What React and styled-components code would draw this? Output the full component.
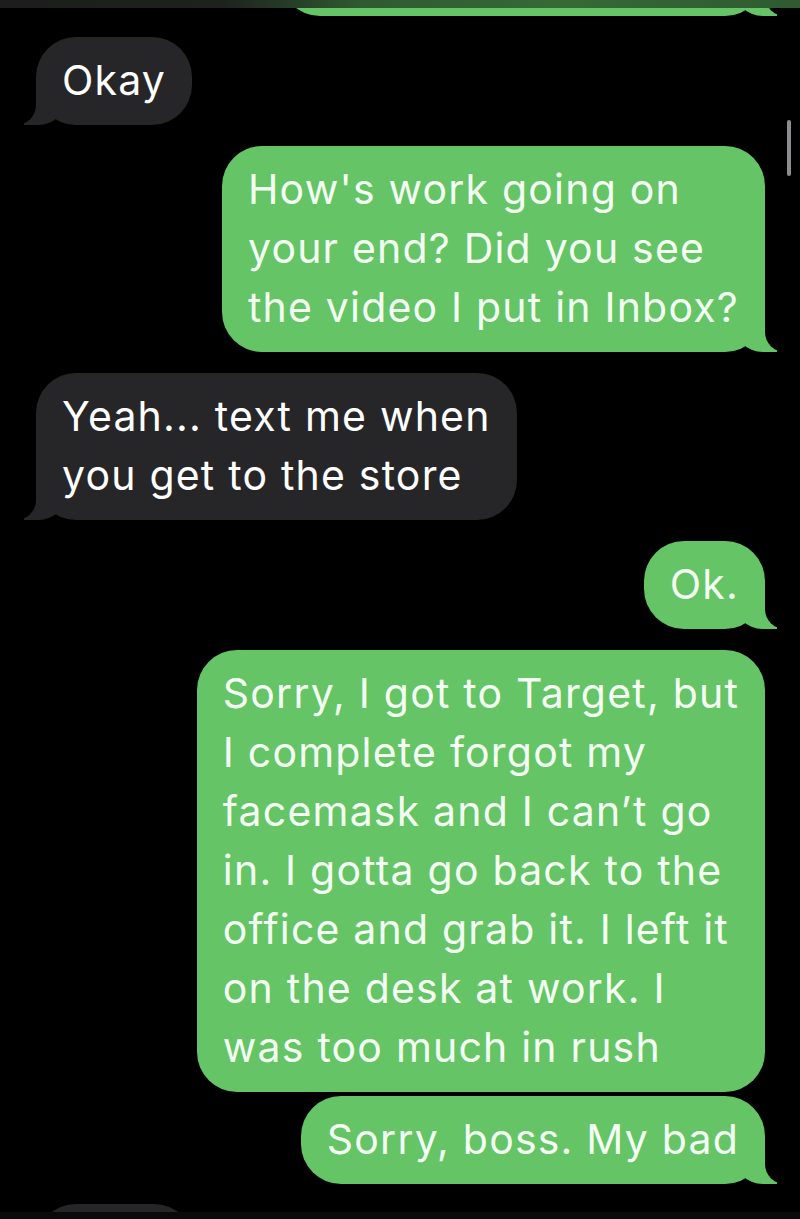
import React from "react";
import styled, { createGlobalStyle, css } from "styled-components";

const GREEN = "#65c466";
const GRAY = "#262628";
const BG = "#000000";

const messages = [
  { id: 0, sent: true, tail: true, lines: ["\u00a0"], width: 485, offset: -72 },
  { id: 1, sent: false, tail: true, lines: ["Okay"] },
  {
    id: 2,
    sent: true,
    tail: true,
    lines: ["How's work going on", "your end? Did you see", "the video I put in Inbox?"],
  },
  { id: 3, sent: false, tail: true, lines: ["Yeah... text me when", "you get to the store"] },
  { id: 4, sent: true, tail: true, lines: ["Ok."] },
  {
    id: 5,
    sent: true,
    tail: false,
    lines: [
      "Sorry, I got to Target, but",
      "I complete forgot my",
      "facemask and I can\u2019t go",
      "in. I gotta go back to the",
      "office and grab it. I left it",
      "on the desk at work. I",
      "was too much in rush",
    ],
  },
  { id: 6, sent: true, tail: true, lines: ["Sorry, boss. My bad"], grouped: true },
  { id: 7, sent: false, tail: true, lines: ["\u00a0"], width: 158, offset: 20 },
];

function App() {
  return (
    <>
      <GlobalStyle />
      <Screen>
        <TopBar />
        <ScrollThumb />
        <Thread>
          {messages.map((m) => (
            <Bubble
              key={m.id}
              $sent={m.sent}
              $tail={m.tail}
              $grouped={m.grouped}
              $offset={m.offset}
              $width={m.width}
            >
              <Text>{m.lines.join("\n")}</Text>
            </Bubble>
          ))}
        </Thread>
        <BottomBar />
      </Screen>
    </>
  );
}

export default App;

const GlobalStyle = createGlobalStyle`
  html, body {
    margin: 0;
    padding: 0;
    background: ${BG};
  }
  * { box-sizing: border-box; }
`;

const Screen = styled.div`
  position: relative;
  width: 800px;
  height: 1219px;
  overflow: hidden;
  background: ${BG};
  font-family: Inter, "Liberation Sans", sans-serif;
`;

const TopBar = styled.div`
  position: absolute;
  top: 0;
  left: 0;
  right: 0;
  height: 8px;
  z-index: 5;
  background: linear-gradient(
    90deg,
    #1c1d1c 0%,
    #1e221e 28%,
    #2f5a30 45%,
    #356a36 70%,
    #2f5a30 100%
  );
`;

const ScrollThumb = styled.div`
  position: absolute;
  top: 120px;
  right: 9px;
  width: 4px;
  height: 56px;
  border-radius: 2px;
  background: #8d8d8f;
  z-index: 5;
`;

const BottomBar = styled.div`
  position: absolute;
  left: 0;
  right: 0;
  bottom: 0;
  height: 7px;
  background: #0a0a0a;
  z-index: 5;
`;

const Thread = styled.div`
  display: flex;
  flex-direction: column;
  padding: 0 35px 0 36px;
`;

const sentTail = css`
  &::before {
    content: "";
    position: absolute;
    bottom: 0;
    right: -12px;
    width: 44px;
    height: 40px;
    background: ${GREEN};
    border-bottom-left-radius: 30px;
    z-index: 0;
  }
  &::after {
    content: "";
    position: absolute;
    bottom: 0;
    right: -20px;
    width: 20px;
    height: 42px;
    background: ${BG};
    border-bottom-left-radius: 20px;
    z-index: 1;
  }
`;

const recvTail = css`
  &::before {
    content: "";
    position: absolute;
    bottom: 0;
    left: -12px;
    width: 44px;
    height: 40px;
    background: ${GRAY};
    border-bottom-right-radius: 30px;
    z-index: 0;
  }
  &::after {
    content: "";
    position: absolute;
    bottom: 0;
    left: -20px;
    width: 20px;
    height: 42px;
    background: ${BG};
    border-bottom-right-radius: 20px;
    z-index: 1;
  }
`;

const Bubble = styled.div`
  position: relative;
  align-self: ${(p) => (p.$sent ? "flex-end" : "flex-start")};
  margin-top: ${(p) =>
    p.$offset !== undefined ? `${p.$offset}px` : p.$grouped ? "4px" : "21px"};
  min-width: ${(p) => (p.$width ? `${p.$width}px` : "0")};
  padding: 14px 26px 15px 26px;
  border-radius: 40px;
  background: ${(p) => (p.$sent ? GREEN : GRAY)};
  color: ${(p) => (p.$sent ? "#f3fff2" : "#ffffff")};
  ${(p) => p.$tail && (p.$sent ? sentTail : recvTail)}
`;

const Text = styled.span`
  position: relative;
  z-index: 2;
  display: block;
  font-size: 41px;
  line-height: 59px;
  letter-spacing: 1.2px;
  white-space: pre;
`;
